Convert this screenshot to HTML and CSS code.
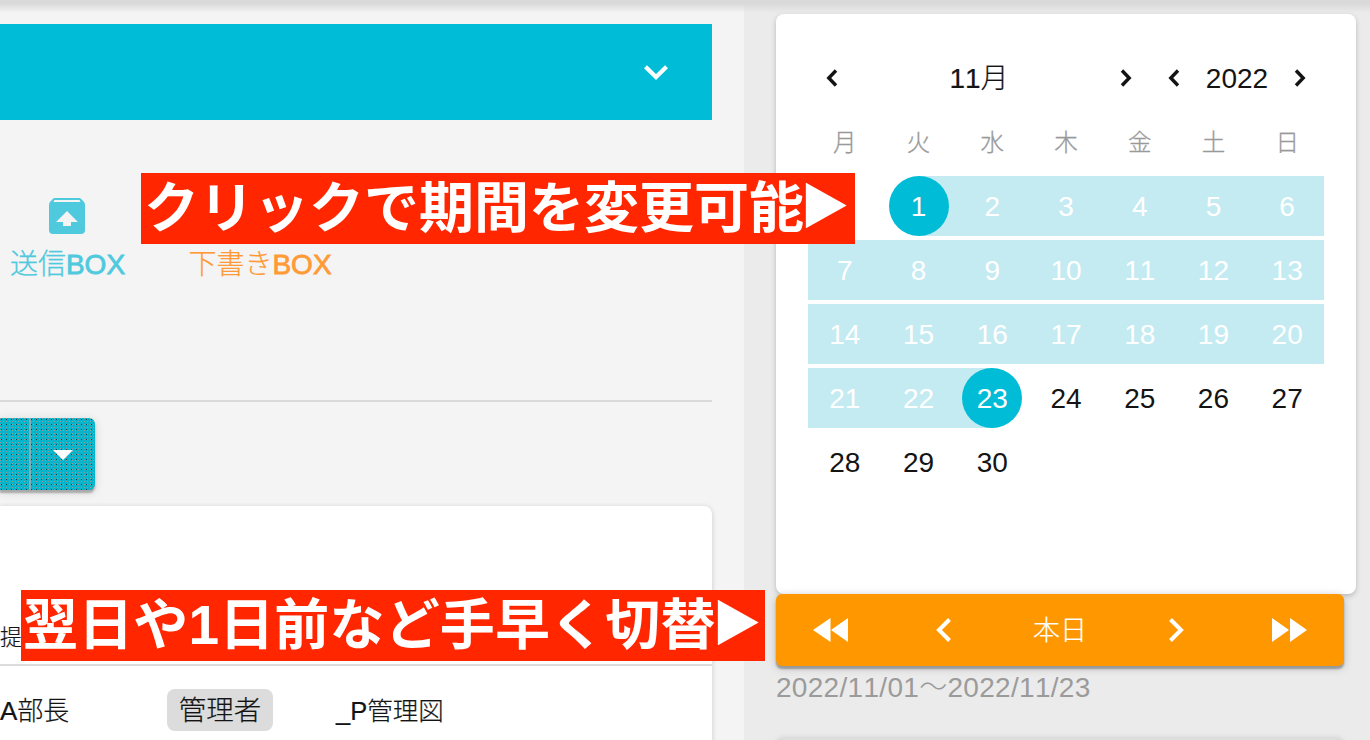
FILE: index.html
```html
<!DOCTYPE html>
<html lang="ja">
<head>
<meta charset="utf-8">
<title>カレンダー</title>
<link rel="stylesheet" href="styles.css">
</head>
<body>
<div class="app">
  <main class="main">
    <div class="banner">
      <svg width="24" height="16" viewBox="0 0 24 16"><path d="M1.500 2.700 12 13 22.500 2.700" fill="none" stroke="#fff" stroke-width="4.200"/></svg>
    </div>
    <div class="boxes">
      <div class="box sent">
        <svg width="36" height="36" viewBox="0 0 36 36"><path fill="#4fc9de" fill-rule="evenodd" d="M6 0H30Q31.500 0 32.500 1.200L35 4Q36 5 36 7V32Q36 36 32 36H4Q0 36 0 32V7Q0 5 1 4L3.500 1.200Q4.500 0 6 0ZM5.500 2 4.500 4H31.500L30.500 2ZM18 13 7 24H14V28H22V24H29Z"/></svg>
        <span>送信<b>BOX</b></span>
      </div>
      <div class="box draft"><span>下書き<b>BOX</b></span></div>
    </div>
    <div class="split">
      <div class="split-main"></div>
      <div class="split-caret"><svg width="20" height="10" viewBox="0 0 20 10"><path d="M0 0H20L10 10Z" fill="#fff"/></svg></div>
    </div>
    <section class="list">
      <div class="list-head">提</div>
      <div class="list-row"><span class="name">A部長</span><span class="chip">管理者</span><span class="group">_P管理図</span></div>
    </section>
  </main>
  <aside class="side">
    <section class="calendar">
      <div class="cal-head">
        <svg class="chev" width="12" height="18" viewBox="0 0 12 18"><path d="M10 1.500 2.800 9 10 16.500"/></svg>
        <span class="month">11月</span>
        <svg class="chev" width="12" height="18" viewBox="0 0 12 18"><path d="M2 1.500 9.200 9 2 16.500"/></svg>
        <svg class="chev year-prev" width="12" height="18" viewBox="0 0 12 18"><path d="M10 1.500 2.800 9 10 16.500"/></svg>
        <span class="year">2022</span>
        <svg class="chev" width="12" height="18" viewBox="0 0 12 18"><path d="M2 1.500 9.200 9 2 16.500"/></svg>
      </div>
      <div class="week names"><span>月</span><span>火</span><span>水</span><span>木</span><span>金</span><span>土</span><span>日</span></div>
      <div class="weeks">
        <div class="week"><span></span><span class="start"><b>1</b></span><span class="in">2</span><span class="in">3</span><span class="in">4</span><span class="in">5</span><span class="in">6</span></div>
        <div class="week full"><span>7</span><span>8</span><span>9</span><span>10</span><span>11</span><span>12</span><span>13</span></div>
        <div class="week full"><span>14</span><span>15</span><span>16</span><span>17</span><span>18</span><span>19</span><span>20</span></div>
        <div class="week"><span class="in">21</span><span class="in">22</span><span class="end"><b>23</b></span><span>24</span><span>25</span><span>26</span><span>27</span></div>
        <div class="week"><span>28</span><span>29</span><span>30</span></div>
      </div>
    </section>
    <nav class="nav">
      <svg width="36" height="24" viewBox="0 0 36 24"><path d="M17.500 0V24L0 12ZM35 0V24L18 12Z" fill="#fff"/></svg>
      <svg class="prev" width="16" height="24" viewBox="0 0 16 24"><path d="M13.500 1.500 3 12 13.500 22.500" fill="none" stroke="#fff" stroke-width="4"/></svg>
      <span>本日</span>
      <svg class="next" width="16" height="24" viewBox="0 0 16 24"><path d="M2.500 1.500 13 12 2.500 22.500" fill="none" stroke="#fff" stroke-width="4"/></svg>
      <svg width="36" height="24" viewBox="0 0 36 24"><path d="M1 0V24L18 12ZM19 0V24L36 12Z" fill="#fff"/></svg>
    </nav>
    <div class="range">2022/11/01〜2022/11/23</div>
    <section class="next-card"></section>
  </aside>
  <div class="topshade"></div>
  <div class="note note-period"><span>クリックで期間を変更可能</span><span class="tri">▶</span></div>
  <div class="note note-day"><span>翌日や1日前など手早く切替</span><span class="tri">▶</span></div>
</div>
</body>
</html>
```

FILE: styles.css
```css
* { box-sizing: border-box; }
body {
  margin: 0;
  font-family: "Liberation Sans", "Noto Sans CJK JP", sans-serif;
  font-size: 28px;
  font-weight: 300;
  font-kerning: none;
  color: #141414;
}
svg { display: block; flex: none; }
.app {
  position: relative;
  display: flex;
  width: 1370px;
  height: 740px;
  overflow: hidden;
  background: #ebebeb;
}
.main {
  width: 744px;
  padding: 24px 32px 0 0;
  background: #f4f4f4;
}
.banner {
  display: flex;
  align-items: center;
  justify-content: flex-end;
  height: 96px;
  padding-right: 44px;
  background: #00bcd7;
}
.boxes {
  display: flex;
  height: 282px;
  padding: 78px 0 0 10px;
  border-bottom: 2px solid #dadada;
  line-height: 40px;
}
.box {
  display: flex;
  flex-direction: column;
  align-items: center;
  gap: 11px;
  width: 115px;
  white-space: nowrap;
}
.box b { font-weight: 400; -webkit-text-stroke: .8px currentColor; }
.sent { color: #4fc9de; -webkit-text-stroke: .3px #4fc9de; }
.sent svg { margin-left: -1px; }
.draft { width: 142px; margin-left: 64px; padding-top: 47px; color: #ff9a35; -webkit-text-stroke: .2px #ff9a35; }
.split {
  display: flex;
  width: 95px;
  height: 72px;
  margin-top: 16px;
  border-radius: 0 6px 6px 0;
  background-color: #08b4ca;
  background-image:
    conic-gradient(from 270deg at 1px 1px, #173f46 90deg, transparent 0),
    conic-gradient(from 270deg at 1px 1px, #999 90deg, transparent 0);
  background-size: 5px 5px, 3px 3px;
  background-position: 1px 1px, 0 0;
  box-shadow: 0 3px 2px #aaa, 0 2px 8px #ccc;
}
.split-main { width: 31px; border-right: 2px solid #8fa9af; }
.split-caret { padding: 32px 0 0 22px; }
.list {
  height: 260px;
  margin-top: 16px;
  border-radius: 0 8px 0 0;
  background: #fff;
  box-shadow: 0 1px 5px #c8c8c8;
  font-size: 26px;
  -webkit-text-stroke: .2px #141414;
}
.list-head {
  height: 160px;
  padding-top: 114px;
  border-bottom: 2px solid #dcdcdc;
  font-size: 22px;
  line-height: 36px;
}
.list-row { display: flex; align-items: center; height: 88px; line-height: 42px; }
.name { width: 167px; margin-top: 1px; }
.chip {
  width: 106px;
  height: 42px;
  border-radius: 8px;
  background: #dcdcdc;
  font-size: 27.5px;
  line-height: 43px;
  text-align: center;
}
.group { margin: 1px 0 0 63px; font-size: 25.5px; }
.side { width: 626px; padding: 14px 14px 0 32px; }
.calendar {
  height: 580px;
  padding: 32px;
  border-radius: 8px;
  background: #fff;
  box-shadow: 0 2px 5px #b8b8b8;
}
.cal-head {
  display: flex;
  align-items: center;
  height: 64px;
  padding: 0 18px;
}
.chev path { fill: none; stroke: #141414; stroke-width: 3.400; }
.month { flex: 1; margin-top: -4px; text-align: center; -webkit-text-stroke: .2px #141414; }
.year-prev { margin-left: 36px; }
.year { width: 114px; padding-top: 1px; text-align: center; }
.week {
  display: grid;
  grid-template-columns: repeat(7, 1fr);
  grid-template-rows: 60px;
  height: 60px;
  line-height: 62px;
  text-align: center;
}
.names { height: 66px; line-height: 67px; color: #999; font-size: 23.5px; -webkit-text-stroke: .3px #999; }
.weeks { display: grid; gap: 4px; }
.full, .in { background: #c4ebf2; color: #fff; }
.start { background: linear-gradient(90deg, transparent 50%, #c4ebf2 50%); }
.end { background: linear-gradient(90deg, #c4ebf2 50%, transparent 50%); }
.week b {
  display: block;
  width: 60px;
  height: 60px;
  margin: 0 auto;
  border-radius: 50%;
  background: #00bcd7;
  color: #fff;
  font-weight: 400;
}
.nav {
  display: flex;
  align-items: center;
  justify-content: space-between;
  width: 568px;
  height: 72px;
  padding: 0 37px;
  border-radius: 6px;
  background: #ff9800;
  color: #fff;
  font-size: 27px;
  line-height: 40px;
  box-shadow: 0 3px 2px #999, 0 2px 8px #bbb;
}
.nav span { margin-top: 1px; -webkit-text-stroke: .2px #fff; }
.prev { margin: 0 -3px 0 3px; }
.next { margin: 0 3px 0 -3px; }
.range { height: 72px; padding-top: 2px; color: #9b9b9b; letter-spacing: .3px; line-height: 40px; white-space: nowrap; }
.next-card { width: 568px; height: 60px; border-radius: 8px; background: #dedede; box-shadow: 0 0 5px #c8c8c8; }
.topshade {
  position: absolute;
  inset: 0 0 auto;
  height: 13px;
  background: linear-gradient(#d9d9d9 0 25%, transparent);
}
.note {
  position: absolute;
  display: flex;
  align-items: center;
  height: 71px;
  padding-left: 3px;
  background: #ff2600;
  color: #fff;
  font-size: 55px;
  font-weight: 700;
  line-height: 71px;
  white-space: nowrap;
}
.note-period { left: 141px; top: 173px; width: 714px; }
.note-day { left: 21px; top: 590px; width: 744px; padding-left: 2px; letter-spacing: .15px; }
.tri { margin-left: 1px; font-family: "DejaVu Sans", sans-serif; transform: translateY(-7px) scale(.97, 1.08); }
```
